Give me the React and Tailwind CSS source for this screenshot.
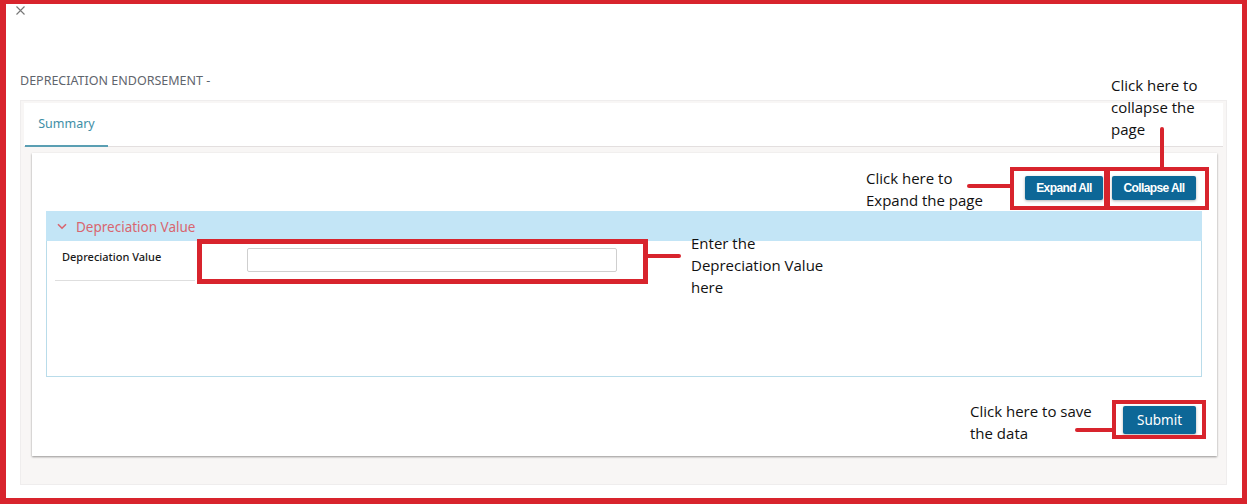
import React from 'react';

const UI = { fontFamily: '"Noto Sans", "Open Sans", sans-serif' };
const NOTE = { fontFamily: '"Open Sans", "Noto Sans", sans-serif' };
const BTN = { fontFamily: '"Liberation Sans", Arial, sans-serif' };

// callout text laid over the screenshot
const Note = ({ left, top, lines }) => (
    <div
        className="absolute text-[15px] leading-[22px] text-[#111] whitespace-nowrap"
        style={{ ...NOTE, left, top }}
    >
        {lines.map(l => <div key={l}>{l}</div>)}
    </div>
);

const App = () => {
    return (
        <div className="relative w-[1250px] h-[504px] bg-white overflow-hidden" style={UI}>
            {/* close */}
            <div className="pt-[6px] pl-[16px] h-[15px]">
                <svg width="9" height="9" viewBox="0 0 9 9" className="block">
                    <path d="M0.5 0.5 L8.5 8.5 M8.5 0.5 L0.5 8.5" stroke="#777" strokeWidth="1.1" />
                </svg>
            </div>

            <div className="mt-[57px] pl-[20px] text-[12.5px] leading-[17px] text-[#5f656d]">
                DEPRECIATION ENDORSEMENT -
            </div>

            <div className="mt-[11px] ml-[20px] w-[1207px] bg-[#f8f6f5] border border-[#efeded] pb-[28px]">
                {/* tabs */}
                <div className="mx-[3px] mt-[2px] h-[44px] bg-white border-b border-[#e3dfdf] flex items-end">
                    <div className="ml-[1px] w-[83px] h-full flex items-center justify-center text-[12.5px] text-[#3e8ea6] border-b-2 border-[#5a9fb3] -mb-px">
                        Summary
                    </div>
                </div>

                <div className="pl-[11px] pr-[9px] pt-[6px]">
                    <div className="bg-white shadow-[0_1px_2px_rgba(0,0,0,0.4)] pt-[23px] pb-[22px] pl-[14px] pr-[15px]">
                        <div className="flex justify-end gap-[9px] pr-[6px]" style={BTN}>
                            <button className="w-[78px] h-[24px] rounded-[2px] bg-[#0d6797] text-white text-[12px] font-bold tracking-[-0.6px] shadow-[0_1px_3px_rgba(0,0,0,0.3)]">
                                Expand All
                            </button>
                            <button className="w-[84px] h-[24px] rounded-[2px] bg-[#0d6797] text-white text-[12px] font-bold tracking-[-0.6px] shadow-[0_1px_3px_rgba(0,0,0,0.3)]">
                                Collapse All
                            </button>
                        </div>

                        {/* accordion */}
                        <div className="mt-[11px]">
                            <div className="h-[30px] bg-[#c3e5f6] flex items-center pl-[11px] gap-[9px] text-[#d9656f]">
                                <svg width="10" height="7" viewBox="0 0 10 7">
                                    <path d="M1 1.2 L5 5.2 L9 1.2" fill="none" stroke="#d9656f" strokeWidth="1.6" />
                                </svg>
                                <span className="text-[13.5px] leading-[18px] mt-[1px]">Depreciation Value</span>
                            </div>
                            <div className="h-[136px] border border-t-0 border-[#b9dcea] pt-[7px] pl-[8px]">
                                <div className="flex items-start">
                                    <div className="w-[140px] h-[33px] border-b border-[#dedede] pl-[7px] pt-[1px] text-[11px] font-medium text-[#1a1a1a]">
                                        Depreciation Value
                                    </div>
                                    <input
                                        type="text"
                                        className="ml-[52px] w-[370px] h-[24px] border border-[#cfcfcf] rounded-[2px] bg-white outline-none"
                                    />
                                </div>
                            </div>
                        </div>

                        <div className="mt-[29px] flex justify-end pr-[6px]">
                            <button className="w-[73px] h-[28px] rounded-[2px] bg-[#0d6797] text-white text-[13.5px] shadow-[0_1px_3px_rgba(0,0,0,0.3)]">
                                Submit
                            </button>
                        </div>
                    </div>
                </div>
            </div>

            {/* annotation overlay */}
            <div className="absolute left-0 top-0 w-[1247px] h-[504px] border-l-[6px] border-t-[4px] border-r-[5px] border-b-[6px] border-[#d8242d] pointer-events-none" />

            <div className="absolute left-[1010px] top-[167px] w-[98px] h-[43px] border-4 border-[#d8242d]" />
            <div className="absolute left-[1106px] top-[167px] w-[103px] h-[43px] border-4 border-[#d8242d]" />
            <div className="absolute left-[1160px] top-[127px] w-[4px] h-[42px] rounded-full bg-[#d8242d]" />
            <div className="absolute left-[967px] top-[184px] w-[45px] h-[4px] rounded-full bg-[#d8242d]" />

            <div className="absolute left-[197px] top-[239px] w-[451px] h-[45px] border-[5px] border-[#d8242d]" />
            <div className="absolute left-[646px] top-[254px] w-[35px] h-[4px] rounded-full bg-[#d8242d]" />

            <div className="absolute left-[1112px] top-[400px] w-[94px] h-[39px] border-4 border-[#d8242d]" />
            <div className="absolute left-[1075px] top-[428px] w-[40px] h-[4px] rounded-full bg-[#d8242d]" />

            <Note left={1111} top={74} lines={['Click here to', 'collapse the', 'page']} />
            <Note left={866} top={167} lines={['Click here to', 'Expand the page']} />
            <Note left={691} top={232} lines={['Enter the', 'Depreciation Value', 'here']} />
            <Note left={970} top={400} lines={['Click here to save', 'the data']} />
        </div>
    );
};

export default App;
